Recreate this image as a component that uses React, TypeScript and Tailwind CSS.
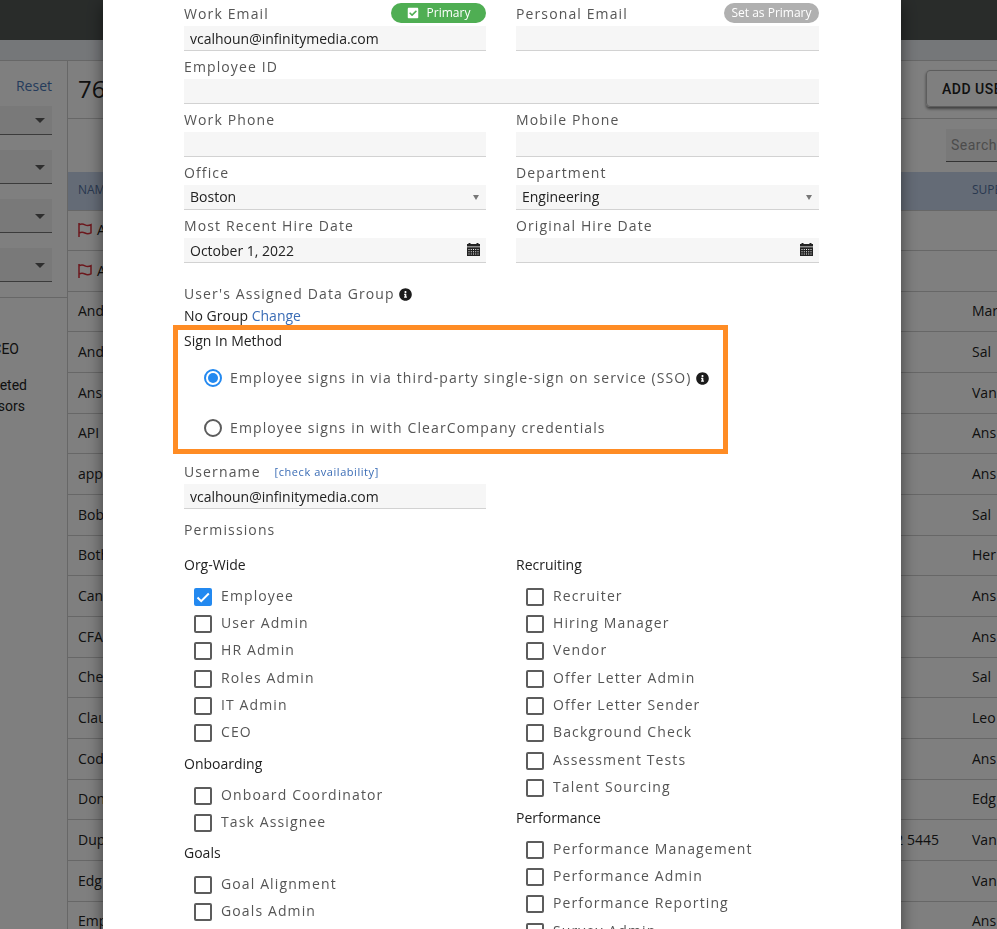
import React, { ReactNode, useId, useState } from "react";
import { FaCheckSquare, FaInfoCircle } from "react-icons/fa";

const people = [
  { name: "And", phone: "", supervisor: "Mark" },
  { name: "And", phone: "", supervisor: "Sal" },
  { name: "Ans", phone: "", supervisor: "Vans" },
  { name: "API", phone: "", supervisor: "Ans" },
  { name: "app", phone: "", supervisor: "Ans" },
  { name: "Bob", phone: "", supervisor: "Sal" },
  { name: "Both", phone: "", supervisor: "Her" },
  { name: "Can", phone: "", supervisor: "Ans" },
  { name: "CFA", phone: "", supervisor: "Ans" },
  { name: "Che", phone: "", supervisor: "Sal" },
  { name: "Clau", phone: "", supervisor: "Leo" },
  { name: "Cod", phone: "", supervisor: "Ans" },
  { name: "Don", phone: "", supervisor: "Edg" },
  { name: "Dup", phone: "2 5445", supervisor: "Vans" },
  { name: "Edg", phone: "", supervisor: "Vans" },
  { name: "Emp", phone: "", supervisor: "Ans" },
];

const leftGroups = [
  {
    title: "Org-Wide",
    items: ["Employee", "User Admin", "HR Admin", "Roles Admin", "IT Admin", "CEO"],
  },
  { title: "Onboarding", items: ["Onboard Coordinator", "Task Assignee"] },
  { title: "Goals", items: ["Goal Alignment", "Goals Admin"] },
];

const rightGroups = [
  {
    title: "Recruiting",
    items: [
      "Recruiter",
      "Hiring Manager",
      "Vendor",
      "Offer Letter Admin",
      "Offer Letter Sender",
      "Background Check",
      "Assessment Tests",
      "Talent Sourcing",
    ],
  },
  {
    title: "Performance",
    items: [
      "Performance Management",
      "Performance Admin",
      "Performance Reporting",
      "Survey Admin",
    ],
  },
];

const inputClass =
  "block h-[25px] w-full rounded-none border-b border-[#d2d2d2] bg-[#f6f6f6] px-1.5 text-sm text-[#222] outline-none";

function FlagIcon() {
  return (
    <svg width="14" height="14" viewBox="0 0 14 14" fill="none" stroke="#d9303a" strokeWidth="1.5">
      <path d="M1 0v14M1 1.8c2-1 4-1 6 0s4 .8 6-.2v8.2c-2 1-4 1.200-6 .2s-4-1-6 0" />
    </svg>
  );
}

function CalendarIcon() {
  return (
    <svg width="13" height="13" viewBox="0 0 13 13" aria-hidden="true">
      <path
        fill="#222"
        fillRule="evenodd"
        d="M1.500 0h2v1h6V0h2v1H13v2.500H0V1h1.500zM0 4.200h13V13H0zM1.500 6v1h1V6zm2.300 0v1h1V6zM6 6v1h1V6zm2.200 0v1h1V6zm2.300 0v1h1V6zm-9 2.300v1h1v-1zm2.300 0v1h1v-1zm2.200 0v1h1v-1zm2.200 0v1h1v-1zm2.300 0v1h1v-1zm-9 2.300v1h1v-1zm2.300 0v1h1v-1zm2.200 0v1h1v-1zm2.200 0v1h1v-1zm2.300 0v1h1v-1z"
      />
    </svg>
  );
}

function TextField({
  label,
  value,
  action,
  className,
}: {
  label: string;
  value?: string;
  action?: ReactNode;
  className?: string;
}) {
  const id = useId();

  return (
    <div className={className}>
      <div className="flex justify-between">
        <label htmlFor={id} className="text-sm leading-6 tracking-[.08em] text-[#555]">
          {label}
        </label>
        {action}
      </div>
      <input id={id} type="text" defaultValue={value} className={inputClass} />
    </div>
  );
}

function SelectField({ label, value }: { label: string; value: string }) {
  const id = useId();

  return (
    <div>
      <label htmlFor={id} className="block text-sm leading-6 tracking-[.08em] text-[#555]">
        {label}
      </label>
      <div className="relative">
        <select id={id} className={inputClass + " appearance-none"}>
          <option>{value}</option>
        </select>
        <svg
          className="pointer-events-none absolute top-2.5 right-[7px]"
          width="6"
          height="5"
          viewBox="0 0 6 5"
        >
          <path d="M0 0h6L3 5z" fill="#777" />
        </svg>
      </div>
    </div>
  );
}

function DateField({ label, value }: { label: string; value?: string }) {
  const id = useId();

  return (
    <div>
      <label htmlFor={id} className="block text-sm leading-6 tracking-[.08em] text-[#555]">
        {label}
      </label>
      <div className="relative">
        <input id={id} type="text" defaultValue={value} className={inputClass} />
        <button
          type="button"
          aria-label={"Choose " + label}
          className="absolute top-[5px] right-1.5"
        >
          <CalendarIcon />
        </button>
      </div>
    </div>
  );
}

function PermissionGroup({ title, items }: { title: string; items: string[] }) {
  return (
    <fieldset>
      <legend className="mb-[13px] text-sm leading-5 text-[#222]">{title}</legend>
      {items.map((item) => (
        <label
          key={item}
          className="mb-[9px] ml-2.5 flex gap-[9px] text-sm leading-[15px] tracking-[.08em] text-[#555] nth-[3n+1]:mb-2.5"
        >
          <span className="grid size-[18px] shrink-0">
            <input
              type="checkbox"
              defaultChecked={item == "Employee"}
              className="peer col-start-1 row-start-1 size-[18px] appearance-none rounded-[2px] border-2 border-[#5c5c5c] checked:border-[#2389f0] checked:bg-[#2389f0]"
            />
            <svg
              viewBox="0 0 18 18"
              className="pointer-events-none invisible col-start-1 row-start-1 size-[18px] peer-checked:visible"
              fill="none"
              stroke="white"
              strokeWidth="2"
            >
              <path d="M3.500 9.500l3.700 3.700L14.800 5.500" />
            </svg>
          </span>
          {item}
        </label>
      ))}
    </fieldset>
  );
}

function SideSelect({ className }: { className: string }) {
  return (
    <div className="relative mr-[15px] mb-[15px]">
      <select
        aria-label="Filter"
        className={
          "block w-full appearance-none rounded-none border-b border-[#777] bg-[#f2f2f2] " +
          className
        }
      >
        <option></option>
      </select>
      <svg
        className="pointer-events-none absolute inset-y-0 right-[7px] my-auto"
        width="10"
        height="5"
        viewBox="0 0 10 5"
      >
        <path d="M0 0h10L5 5z" fill="#5c5c5c" />
      </svg>
    </div>
  );
}

function Sidebar() {
  return (
    <aside className="w-[68px] shrink-0 overflow-hidden border-r border-[#cfcfcf] pt-[15px]">
      <div className="mb-[10px] flex justify-end pr-[15px]">
        <a href="#reset" className="text-sm leading-5 text-[#4a78b8]">
          Reset
        </a>
      </div>
      <SideSelect className="h-[29px]" />
      <SideSelect className="h-[34px]" />
      <SideSelect className="h-[34px]" />
      <SideSelect className="h-[34px]" />
      <hr className="border-[#cfcfcf]" />
      <div className="mt-[41px] font-[Roboto,sans-serif] text-sm leading-[21px] text-[#222]">
        <p className="mb-[15px] flex justify-end pr-12">CEO</p>
        <p className="flex justify-end pr-10">eted</p>
        <p className="flex justify-end pr-[42px]">sors</p>
      </div>
    </aside>
  );
}

function UserList() {
  return (
    <main className="flex-1 overflow-hidden">
      <div className="w-[1000px]">
        <div className="flex h-[58px] items-center justify-between border-b border-[#cfcfcf] px-2.5 pb-0.5">
          <h1 className="text-2xl text-[#222]">76</h1>
          <button className="h-[37px] w-[132px] rounded border border-[#bbb] pl-[15px] text-left font-[Roboto,sans-serif] text-sm font-medium tracking-[.5px] text-[#222] shadow-[0_2px_3px_rgba(0,0,0,.5)]">
            ADD USERS
          </button>
        </div>
        <div className="flex h-[53px] items-center justify-end pr-2.5">
          <input
            type="text"
            aria-label="Search users"
            placeholder="Search"
            className="h-[33px] w-[112px] border-b border-[#666] bg-[#f2f2f2] px-[5px] font-[Roboto,sans-serif] text-sm tracking-[.5px] placeholder:text-[#999]"
          />
        </div>
        <table className="w-full table-fixed text-left text-sm text-[#222]">
          <thead>
            <tr className="h-[38px] border-b border-[#cfcfcf] bg-[#c9d7ed] text-xs text-[#52709f]">
              <th className="w-[812px] pb-0.5 pl-2.5 font-normal">NAME</th>
              <th className="w-[72px]"></th>
              <th className="pb-0.5 pl-5 font-normal">SUPERVISOR</th>
            </tr>
          </thead>
          <tbody>
            {["A", "A"].map((name, i) => (
              <tr key={i} className="h-10 border-b border-[#cfcfcf] even:h-[41px]">
                <td className="pl-2.5">
                  <span className="flex items-center gap-[5px]">
                    <FlagIcon />
                    {name}
                  </span>
                </td>
                <td></td>
                <td></td>
              </tr>
            ))}
            {people.map((person, i) => (
              <tr key={i} className="h-[41px] border-b border-[#cfcfcf] nth-[3n]:h-10">
                <td className="pl-2.5">{person.name}</td>
                <td className="pr-[13px] text-right">{person.phone}</td>
                <td className="pl-5">{person.supervisor}</td>
              </tr>
            ))}
          </tbody>
        </table>
      </div>
    </main>
  );
}

function SignInMethod() {
  const [method, setMethod] = useState<"sso" | "credentials">("sso");
  const radioClass =
    "size-[18px] appearance-none rounded-full border-2 border-[#5c5c5c] bg-clip-content p-[2px] checked:border-[#2389f0] checked:bg-[#2389f0]";

  return (
    <fieldset className="-ml-[11px] max-w-[555px] border-[5px] border-[#ff8c24] pt-px pb-[11px] pl-1.5">
      <div className="text-sm leading-5 text-[#222]">Sign In Method</div>
      <div className="mt-[17px] ml-5 space-y-[30px] text-sm leading-5 tracking-[.08em] whitespace-nowrap text-[#555]">
        <div className="flex items-center">
          <label className="flex items-center gap-2">
            <input
              type="radio"
              name="method"
              checked={method == "sso"}
              onChange={() => setMethod("sso")}
              className={radioClass}
            />
            Employee signs in via third-party single-sign on service (SSO)
          </label>
          <FaInfoCircle className="ml-1 size-[13px] text-[#1c1c1c]" />
        </div>
        <label className="flex items-center gap-2">
          <input
            type="radio"
            name="method"
            checked={method == "credentials"}
            onChange={() => setMethod("credentials")}
            className={radioClass}
          />
          Employee signs in with ClearCompany credentials
        </label>
      </div>
    </fieldset>
  );
}

function EditUserModal() {
  const usernameId = useId();

  return (
    <div
      role="dialog"
      aria-label="Edit user"
      className="h-fit min-h-full w-full max-w-[798px] bg-white pt-0.5 pr-[82px] pl-[81px] shadow-[0_5px_15px_rgba(0,0,0,.5)]"
    >
      <form>
        <div className="grid grid-cols-[302fr_303fr] gap-x-[30px] gap-y-1">
          <TextField
            label="Work Email"
            value="vcalhoun@infinitymedia.com"
            action={
              <button
                type="button"
                className="mt-px flex h-5 w-[95px] items-center justify-center gap-2 rounded-full bg-[#4fae53] text-xs text-white"
              >
                <FaCheckSquare className="size-3" />
                Primary
              </button>
            }
          />
          <TextField
            label="Personal Email"
            action={
              <button
                type="button"
                className="mt-px h-5 w-[95px] rounded-full bg-[#b0b0b0] text-xs whitespace-nowrap text-white"
              >
                Set as Primary
              </button>
            }
          />
          <TextField label="Employee ID" className="col-span-2" />
          <TextField label="Work Phone" />
          <TextField label="Mobile Phone" />
          <SelectField label="Office" value="Boston" />
          <SelectField label="Department" value="Engineering" />
          <DateField label="Most Recent Hire Date" value="October 1, 2022" />
          <DateField label="Original Hire Date" />
        </div>

        <div className="mt-[19px] flex items-center gap-1 text-sm leading-6 tracking-[.08em] text-[#555]">
          User's Assigned Data Group
          <FaInfoCircle className="size-[13px] text-[#1c1c1c]" />
        </div>
        <p className="text-sm leading-[19px] text-[#222]">
          No Group{" "}
          <a href="#change" className="text-[#3a6cb5]">
            Change
          </a>
        </p>

        <SignInMethod />

        <div className="mt-1.5 grid grid-cols-[302fr_303fr] gap-x-[30px]">
          <div>
            <div className="flex items-center gap-3.5">
              <label
                htmlFor={usernameId}
                className="text-sm leading-6 tracking-[.08em] text-[#555]"
              >
                Username
              </label>
              <a href="#check" className="text-[11px] tracking-[.05em] text-[#3a6cb5]">
                [check availability]
              </a>
            </div>
            <input
              id={usernameId}
              type="text"
              defaultValue="vcalhoun@infinitymedia.com"
              className={inputClass}
            />
          </div>
        </div>

        <h2 className="mt-[11px] mb-[15px] text-sm leading-5 tracking-[.08em] text-[#555]">
          Permissions
        </h2>
        <div className="grid grid-cols-[302fr_303fr] gap-x-[30px]">
          <div className="space-y-0.5">
            {leftGroups.map((group) => (
              <PermissionGroup key={group.title} {...group} />
            ))}
          </div>
          <div className="space-y-0.5">
            {rightGroups.map((group) => (
              <PermissionGroup key={group.title} {...group} />
            ))}
          </div>
        </div>
      </form>
    </div>
  );
}

export default function App() {
  return (
    <div className="flex h-screen flex-col overflow-hidden bg-white font-['Open_Sans','Noto_Sans',sans-serif]">
      <header className="h-10 shrink-0 bg-[#525855]"></header>
      <div className="h-[21px] shrink-0 border-b border-[#cfcfcf] bg-[#ebeef3]"></div>
      <div className="flex min-h-0 flex-1">
        <Sidebar />
        <UserList />
      </div>
      <div className="fixed inset-0 flex justify-center overflow-hidden bg-black/50 pl-[7px]">
        <EditUserModal />
      </div>
    </div>
  );
}
